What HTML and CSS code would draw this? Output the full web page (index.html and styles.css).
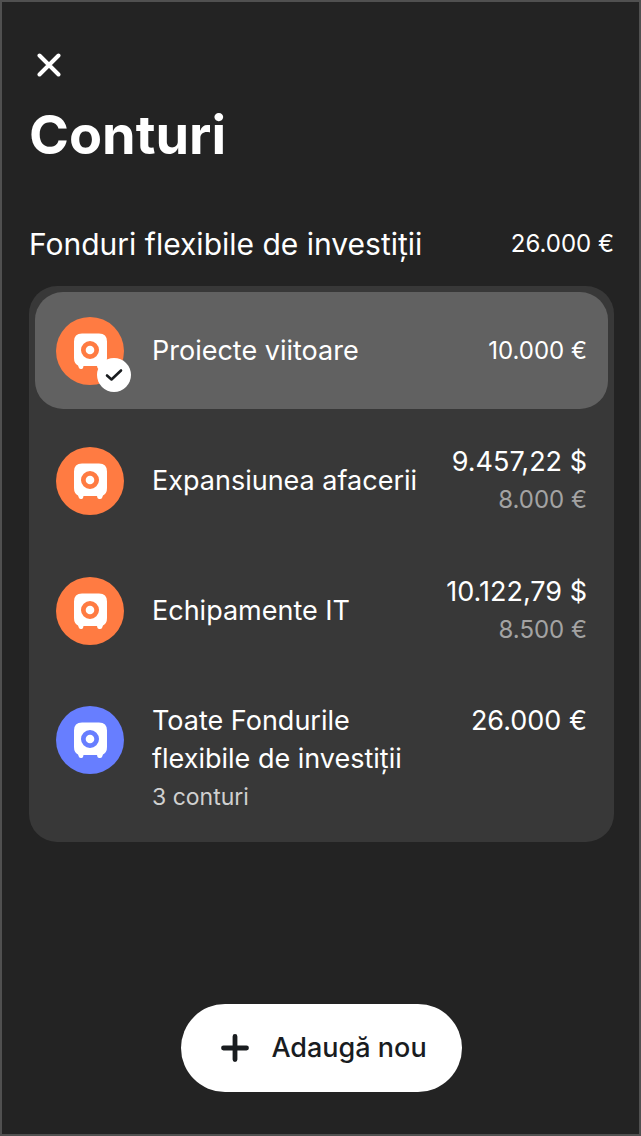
FILE: index.html
```html
<!DOCTYPE html>
<html lang="ro">
<head>
	<meta charset="UTF-8">
	<title>Conturi</title>
	<meta name="viewport" content="width=device-width, initial-scale=1.0">
	<link rel="stylesheet" href="styles.css">
</head>
<body>
	<!-- shared icon -->
	<svg class="sprite" aria-hidden="true">
		<symbol id="safe" viewBox="0 0 68 68">
			<path fill="#fff" fill-rule="evenodd" d="M26 16.500H43Q51 16.500 51 24.500V41Q51 46.500 47 48.500L46 51Q45.500 52 44 52H43.500Q42 52 41.500 51L41 49H27.500L27 51Q26.500 52 25.500 52H25Q23.500 52 23 51L22 48.500Q18 46.500 18 41V24.500Q18 16.500 26 16.500ZM34 24A9 9 0 1 0 34 42A9 9 0 1 0 34 24Z"/>
			<circle cx="34" cy="33" r="4.300" fill="#fff"/>
		</symbol>
	</svg>

	<main class="screen">
		<button class="close" type="button" aria-label="Închide">
			<svg width="24" height="24" viewBox="0 0 24 24" fill="none" stroke="currentColor" stroke-width="4" stroke-linecap="round">
				<path d="M2.500 2.500L21.500 21.500M21.500 2.500L2.500 21.500"/>
			</svg>
		</button>
		<h1>Conturi</h1>

		<div class="section-head">
			<h2>Fonduri flexibile de investiții</h2>
			<span class="small">26.000 €</span>
		</div>

		<ul class="accounts">
			<li>
				<button class="account selected" type="button" aria-pressed="true">
					<span class="icon">
						<svg width="68" height="68"><use href="#safe"/></svg>
						<span class="check">
							<svg width="34" height="34" viewBox="0 0 34 34" fill="none" stroke="currentColor" stroke-width="2.600" stroke-linecap="round" stroke-linejoin="round">
								<path d="M10 17.500L14.500 21.500L24 12.500"/>
							</svg>
						</span>
					</span>
					<span class="name">Proiecte viitoare</span>
					<span class="amounts"><span class="small">10.000 €</span></span>
				</button>
			</li>
			<li>
				<button class="account" type="button">
					<span class="icon"><svg width="68" height="68"><use href="#safe"/></svg></span>
					<span class="name">Expansiunea afacerii</span>
					<span class="amounts">
						<span class="amount">9.457,22 $</span>
						<span class="small muted">8.000 €</span>
					</span>
				</button>
			</li>
			<li>
				<button class="account" type="button">
					<span class="icon"><svg width="68" height="68"><use href="#safe"/></svg></span>
					<span class="name">Echipamente IT</span>
					<span class="amounts">
						<span class="amount">10.122,79 $</span>
						<span class="small muted">8.500 €</span>
					</span>
				</button>
			</li>
			<li>
				<button class="account total" type="button">
					<span class="icon blue"><svg width="68" height="68"><use href="#safe"/></svg></span>
					<span class="name">Toate Fondurile flexibile de investiții <span class="count">3 conturi</span></span>
					<span class="amounts"><span class="amount">26.000 €</span></span>
				</button>
			</li>
		</ul>

		<button class="add" type="button">
			<svg width="28" height="28" viewBox="0 0 28 28" fill="none" stroke="currentColor" stroke-width="4.800" stroke-linecap="round">
				<path d="M14 2.500V25.500M2.500 14H25.500"/>
			</svg>
			Adaugă nou
		</button>
	</main>
</body>
</html>
```
FILE: styles.css
```css
* {
	box-sizing: border-box;
}

body {
	margin: 0;
	background-color: #232323;
	color: #fff;
	font-family: Inter, sans-serif;
}

button {
	border: none;
	padding: 0;
	background: none;
	color: inherit;
	font: inherit;
	cursor: pointer;
}

svg {
	display: block;
}

.sprite {
	position: absolute;
	width: 0;
	height: 0;
}

.screen {
	display: flex;
	flex-direction: column;
	min-height: 100vh;
	padding: 44px 25px 42px 27px;
	border: 2px solid #505050;
}

.close {
	align-self: flex-start;
	padding: 7px 8px;
}

h1 {
	margin: 15px 0 0;
	font-size: 54px;
	line-height: 72px;
	font-weight: 700;
}

.section-head {
	display: flex;
	justify-content: space-between;
	align-items: center;
	margin-top: 53px;
}

h2 {
	margin: 0;
	font-size: 30px;
	line-height: 40px;
	font-weight: 400;
}

.accounts {
	display: flex;
	flex-direction: column;
	gap: 13px;
	list-style: none;
	margin: 22px 0 32px;
	padding: 6px;
	border-radius: 28px;
	background-color: #383838;
}

.account {
	display: flex;
	align-items: center;
	gap: 28px;
	width: 100%;
	min-height: 117px;
	padding: 20px 21px;
	border-radius: 28px;
	text-align: left;
}

.selected {
	background-color: #616161;
}

.total {
	align-items: flex-start;
}

.total .icon {
	margin-top: 4px;
}

.icon {
	position: relative;
	flex: none;
	border-radius: 50%;
	background-color: #ff7b42;
}

.blue {
	background-color: #677eff;
}

.check {
	position: absolute;
	right: -7px;
	bottom: -7px;
	border-radius: 50%;
	background-color: #fff;
	color: #191c1f;
}

.name {
	flex: 1;
	font-size: 27px;
	line-height: 38px;
}

.amounts {
	display: flex;
	flex-direction: column;
	align-items: flex-end;
	white-space: nowrap;
}

.amount {
	font-size: 27px;
	line-height: 38px;
}

.small {
	font-size: 24px;
	line-height: 38px;
}

.muted {
	color: #a3a3a3;
}

.count {
	display: block;
	font-size: 23px;
	color: #d0d0d0;
}

.add {
	display: flex;
	align-items: center;
	align-self: center;
	gap: 22px;
	margin-top: auto;
	padding: 24px 35px 24px 40px;
	border-radius: 44px;
	background-color: #fff;
	color: #191c1f;
	font-size: 27px;
	line-height: 40px;
	font-weight: 500;
}
```
